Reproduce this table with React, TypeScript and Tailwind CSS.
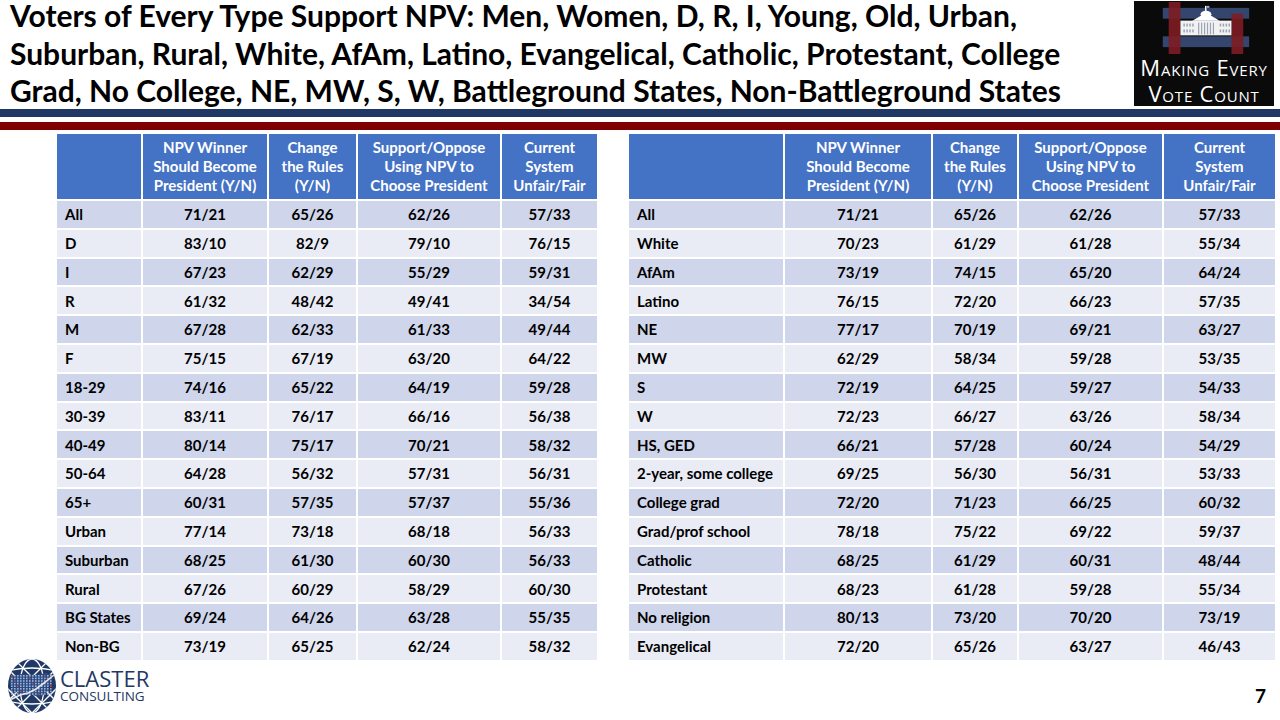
import React from "react";

const leftRows: string[][] = [
  ["All", "71/21", "65/26", "62/26", "57/33"],
  ["D", "83/10", "82/9", "79/10", "76/15"],
  ["I", "67/23", "62/29", "55/29", "59/31"],
  ["R", "61/32", "48/42", "49/41", "34/54"],
  ["M", "67/28", "62/33", "61/33", "49/44"],
  ["F", "75/15", "67/19", "63/20", "64/22"],
  ["18-29", "74/16", "65/22", "64/19", "59/28"],
  ["30-39", "83/11", "76/17", "66/16", "56/38"],
  ["40-49", "80/14", "75/17", "70/21", "58/32"],
  ["50-64", "64/28", "56/32", "57/31", "56/31"],
  ["65+", "60/31", "57/35", "57/37", "55/36"],
  ["Urban", "77/14", "73/18", "68/18", "56/33"],
  ["Suburban", "68/25", "61/30", "60/30", "56/33"],
  ["Rural", "67/26", "60/29", "58/29", "60/30"],
  ["BG States", "69/24", "64/26", "63/28", "55/35"],
  ["Non-BG", "73/19", "65/25", "62/24", "58/32"],
];

const rightRows: string[][] = [
  ["All", "71/21", "65/26", "62/26", "57/33"],
  ["White", "70/23", "61/29", "61/28", "55/34"],
  ["AfAm", "73/19", "74/15", "65/20", "64/24"],
  ["Latino", "76/15", "72/20", "66/23", "57/35"],
  ["NE", "77/17", "70/19", "69/21", "63/27"],
  ["MW", "62/29", "58/34", "59/28", "53/35"],
  ["S", "72/19", "64/25", "59/27", "54/33"],
  ["W", "72/23", "66/27", "63/26", "58/34"],
  ["HS, GED", "66/21", "57/28", "60/24", "54/29"],
  ["2-year, some college", "69/25", "56/30", "56/31", "53/33"],
  ["College grad", "72/20", "71/23", "66/25", "60/32"],
  ["Grad/prof school", "78/18", "75/22", "69/22", "59/37"],
  ["Catholic", "68/25", "61/29", "60/31", "48/44"],
  ["Protestant", "68/23", "61/28", "59/28", "55/34"],
  ["No religion", "80/13", "73/20", "70/20", "73/19"],
  ["Evangelical", "72/20", "65/26", "63/27", "46/43"],
];

const headers: string[][] = [
  [],
  ["NPV Winner", "Should Become", "President (Y/N)"],
  ["Change", "the Rules", "(Y/N)"],
  ["Support/Oppose", "Using NPV to", "Choose President"],
  ["Current", "System", "Unfair/Fair"],
];

function DataTable({ rows, cols, width }: { rows: string[][]; cols: string; width: string }) {
  return (
    <div className={`grid ${cols} ${width} gap-[2px] grid-rows-[65px_repeat(16,26.8px)]`}>
      {headers.map((h, i) => (
        <div
          key={"h" + i}
          className="bg-[#4472C4] text-white font-bold text-[15px] leading-[19px] flex flex-col items-center justify-center text-center"
        >
          {h.map((l, j) => (
            <span key={j} className="whitespace-nowrap">{l}</span>
          ))}
        </div>
      ))}
      {rows.map((r, ri) =>
        r.map((c, ci) => (
          <div
            key={ri + "-" + ci}
            className={`${ri % 2 === 0 ? "bg-[#CFD5EA]" : "bg-[#E9EBF5]"} text-black font-bold text-[15px] flex items-center whitespace-nowrap ${
              ci === 0 ? "justify-start pl-[8px]" : "justify-center"
            }`}
          >
            {c}
          </div>
        ))
      )}
    </div>
  );
}

function MevcLogo() {
  return (
    <div className="w-[140px] h-[105px] bg-[#0a0a0a] flex flex-col items-center mt-[1px]">
      <svg width="140" height="54" viewBox="0 0 140 54">
        <rect x="28" y="7" width="88" height="11" fill="#34466e" />
        <rect x="28" y="36" width="88" height="11" fill="#34466e" />
        <rect x="34" y="1" width="12" height="53" fill="#7d1c22" opacity="0.9" />
        <rect x="98" y="13" width="12" height="41" fill="#7d1c22" opacity="0.9" />
        <g fill="#ffffff">
          <rect x="46" y="20" width="52" height="15" fill="#f2f2f2" />
          <path d="M58 20 L72 12 L86 20 Z" />
          <rect x="71" y="5" width="1.5" height="6" />
          <rect x="72.5" y="5" width="3" height="2" fill="#9cb0d8" />
          <ellipse cx="72" cy="13.5" rx="5.5" ry="3.5" />
        </g>
        <g fill="#9aa3b5">
          {[49, 52, 55, 58, 86, 89, 92, 95].map((x) => (
            <React.Fragment key={x}>
              <rect x={x} y="23" width="1.5" height="3" />
              <rect x={x} y="29" width="1.5" height="3" />
            </React.Fragment>
          ))}
          {[64, 67, 70, 73, 76, 79].map((x) => (
            <rect key={x} x={x} y="22" width="1.2" height="12" />
          ))}
        </g>
      </svg>
      <div
        className="text-white text-[22px] leading-[26px] text-center tracking-[0.8px]"
        style={{ fontFamily: "'Open Sans', 'DejaVu Sans', sans-serif", fontVariant: "small-caps" }}
      >
        <div className="whitespace-nowrap">Making Every</div>
        <div className="whitespace-nowrap">Vote Count</div>
      </div>
    </div>
  );
}

function ClasterLogo() {
  return (
    <div className="flex items-center">
      <svg width="52" height="58" viewBox="0 0 52 58">
        <defs>
          <clipPath id="gc">
            <ellipse cx="26" cy="29" rx="24" ry="27" />
          </clipPath>
        </defs>
        <ellipse cx="26" cy="29" rx="24" ry="27" fill="#1f3864" />
        <g clipPath="url(#gc)" stroke="#ffffff" strokeWidth="1.3" fill="none">
          <path d="M-10 0 L60 70" />
          <path d="M-2 -8 L62 56" />
          <path d="M-20 10 L44 74" />
          <path d="M62 0 L-8 70" />
          <path d="M54 -8 L-10 56" />
          <path d="M72 10 L8 74" />
          <ellipse cx="26" cy="29" rx="12" ry="27" />
          <path d="M0 14 Q26 8 52 14" />
          <path d="M0 44 Q26 50 52 44" />
        </g>
        <g clipPath="url(#gc)">
          <path d="M4 20 L14 17 L30 18 L40 16 L46 18 L44 28 L40 36 L34 40 L26 38 L16 38 L8 34 L4 28 Z" fill="#2b4a82" />
          {Array.from({ length: 8 }).map((_, r) =>
            Array.from({ length: 14 }).map((__, c) => (
              <rect
                key={r + "-" + c}
                x={5 + c * 3}
                y={18 + r * 2.6}
                width="1.6"
                height="1.6"
                fill={(r * 3 + c * 5) % 11 === 0 ? "#c0504d" : "#9fb3d8"}
              />
            ))
          )}
          <path d="M2 44 L14 38 L22 36 L30 32 L38 26 L48 18" stroke="#e8e8e8" strokeWidth="1.6" fill="none" />
        </g>
      </svg>
      <div className="flex flex-col ml-[2px] text-[#1f3864]" style={{ fontFamily: "'Open Sans', sans-serif" }}>
        <span className="text-[22px] leading-[22px] whitespace-nowrap">CLASTER</span>
        <span className="text-[13.5px] leading-[15px] whitespace-nowrap">CONSULTING</span>
      </div>
    </div>
  );
}

export default function App() {
  return (
    <div
      className="w-[1280px] h-[720px] bg-white overflow-hidden flex flex-col"
      style={{ fontFamily: "Lato, 'Open Sans', sans-serif" }}
    >
      <div className="flex justify-between h-[109px]">
        <div className="pl-[10px] text-[30px] leading-[31px] font-bold text-black flex flex-col">
          <div className="whitespace-nowrap h-[37.5px]">Voters of Every Type Support NPV: Men, Women, D, R, I, Young, Old, Urban,</div>
          <div className="whitespace-nowrap h-[37.5px]">Suburban, Rural, White, AfAm, Latino, Evangelical, Catholic, Protestant, College</div>
          <div className="whitespace-nowrap h-[34px]">Grad, No College, NE, MW, S, W, Battleground States, Non-Battleground States</div>
        </div>
        <div className="pr-[6px]">
          <MevcLogo />
        </div>
      </div>
      <div className="h-[8px] bg-[#203864]" />
      <div className="h-[5px]" />
      <div className="h-[8px] bg-[#7f0000]" />
      <div className="flex pl-[57px] gap-[32px] mt-[4px]">
        <DataTable rows={leftRows} cols="grid-cols-[84px_124px_87px_142px_95px]" width="w-[540px]" />
        <DataTable rows={rightRows} cols="grid-cols-[154px_146px_84px_143px_111px]" width="w-[646px]" />
      </div>
      <div className="flex justify-between items-start pl-[6px] pr-[14px] -mt-[3px]">
        <ClasterLogo />
        <div className="text-[19px] font-bold text-black mt-[25px]">7</div>
      </div>
    </div>
  );
}
